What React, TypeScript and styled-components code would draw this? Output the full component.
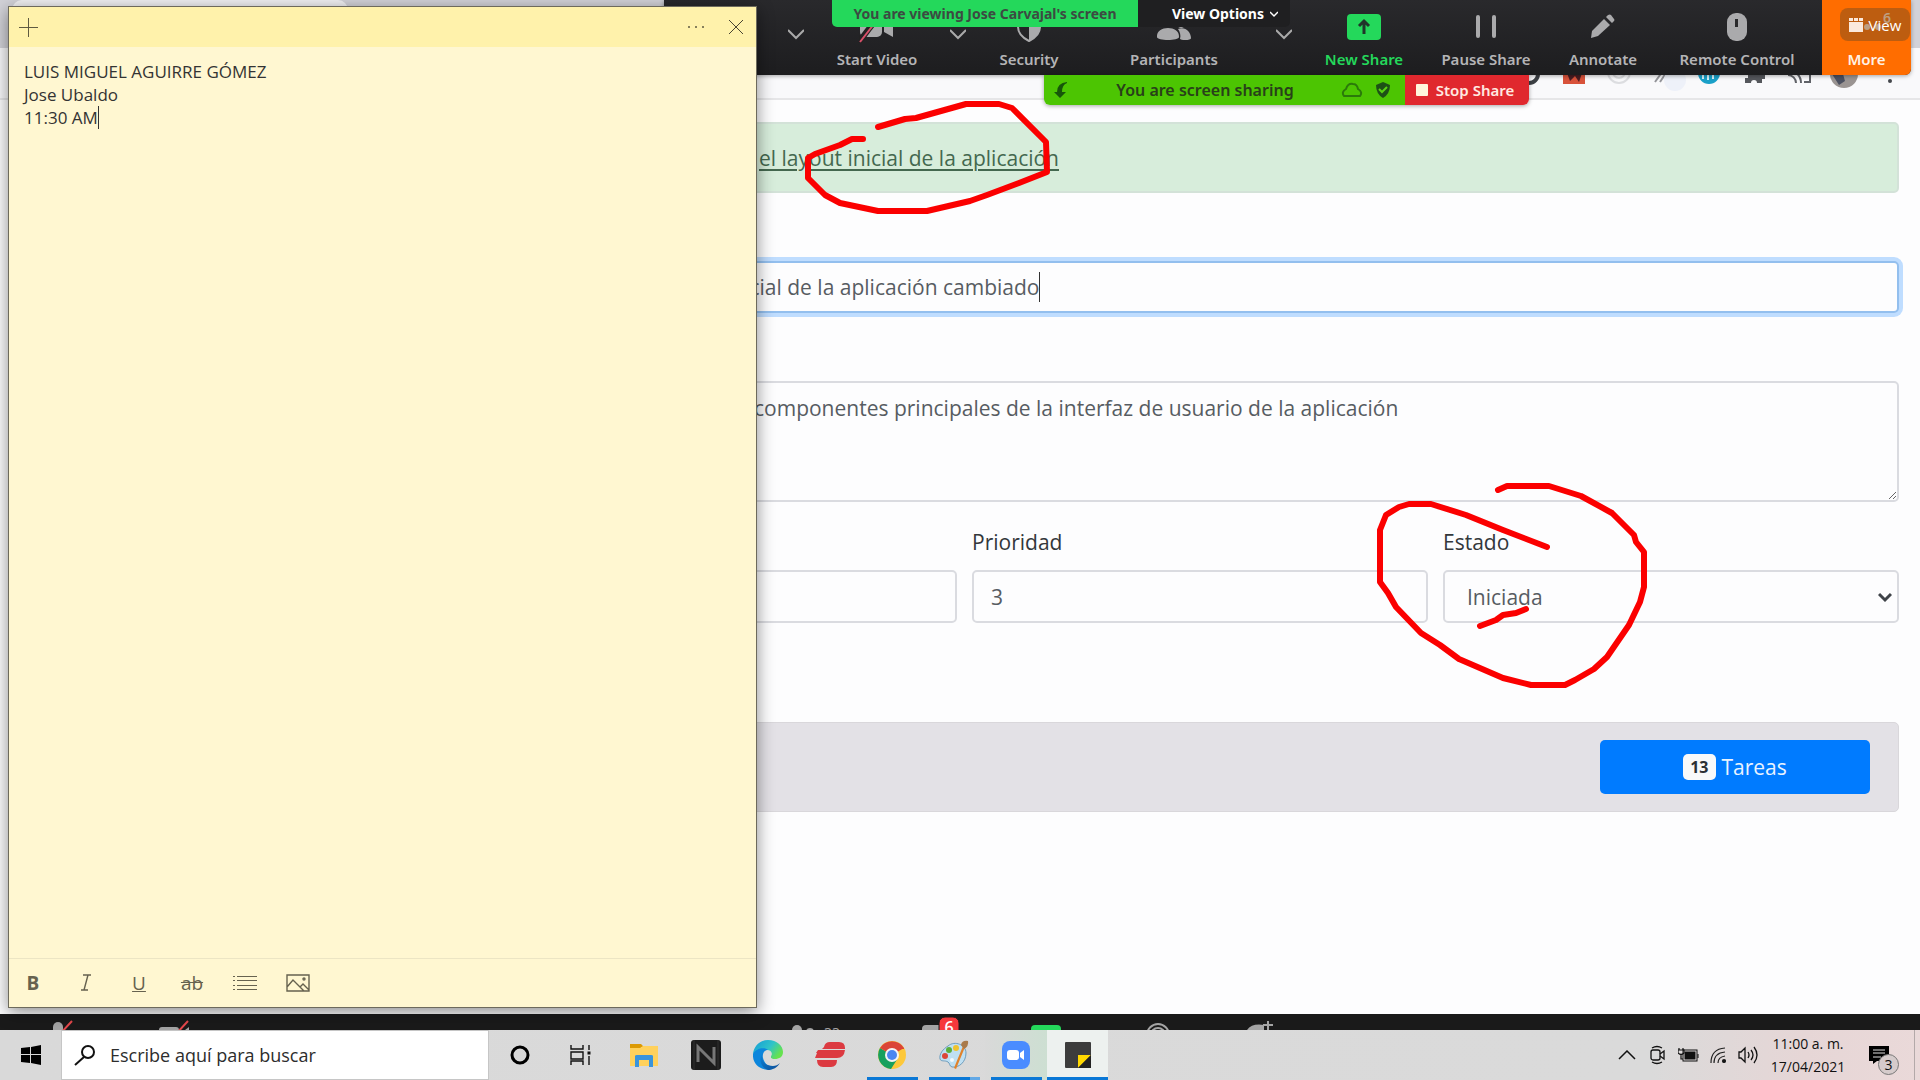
import React from "react";
import styled, { createGlobalStyle, css } from "styled-components";

const sans = `"Open Sans", "Noto Sans", sans-serif`;
const ui = `"Noto Sans", "Open Sans", sans-serif`;

const GlobalStyle = createGlobalStyle`
  *, *::before, *::after { box-sizing: border-box; }
  body { margin: 0; font-family: ${sans}; background: #fdfdfe; overflow: hidden; }
  button, input, textarea, select { font: inherit; color: inherit; margin: 0; }
  button { border: 0; padding: 0; background: none; cursor: pointer; }
  svg { display: block; flex: none; }
`;

const Desktop = styled.div`
  position: relative;
  display: flex;
  flex-direction: column;
  height: 100vh;
  overflow: hidden;
`;

/* ---------- shared browser page ---------- */

const Shared = styled.div`
  flex: 1;
  min-height: 0;
  display: flex;
  flex-direction: column;
  background: #fdfdfe;
  overflow: hidden;
`;

const TabStrip = styled.div`
  height: 48px;
  padding-left: 12px;
  background: #d2d2d8;
  flex: none;
`;

const Tab = styled.div`
  width: 336px;
  height: 48px;
  border-radius: 10px 10px 0 0;
  background: #f1f1f3;
`;

const BrowserBar = styled.div`
  flex: none;
  height: 52px;
  display: flex;
  align-items: center;
  justify-content: flex-end;
  padding-right: 10px;
  background: #f9f9fb;
  border-bottom: 2px solid #e6e6e8;
`;

const Page = styled.main`
  display: flex;
  flex-direction: column;
  padding: 22px 21px 0 30px;
  font-size: 21px;
  line-height: 28px;
  color: #575c62;
`;

const Alert = styled.div`
  height: 71px;
  display: flex;
  align-items: center;
  padding-left: 727px;
  border: 2px solid #d3e2d8;
  border-radius: 5px;
  background: #d7eddb;
  margin-bottom: 68px;
`;

const AlertLink = styled.a`
  color: #44684f;
  text-decoration: underline;
  text-decoration-thickness: 2px;
  text-underline-offset: 3px;
  white-space: nowrap;
`;

const control = css`
  width: 100%;
  border: 2px solid #dadbe0;
  border-radius: 5px;
  background: #fdfdfe;
  color: #575c62;
  outline: none;
`;

const TitleRow = styled.label`
  ${control}
  height: 52px;
  display: flex;
  align-items: center;
  padding: 0 18px 0 694px;
  border-color: #93bfee;
  box-shadow: 0 0 0 4px #bfddff;
  margin-bottom: 68px;
`;

const TitleInput = styled.input`
  field-sizing: content;
  border: 0;
  padding: 0;
  outline: none;
  background: none;
`;

const Caret = styled.span<{ $h: number }>`
  width: 1px;
  height: ${(p) => p.$h}px;
  background: #333;
`;

const Description = styled.textarea`
  ${control}
  display: block;
  height: 121px;
  padding: 11px 18px 11px 722px;
  resize: vertical;
  overflow: hidden;
  white-space: pre;
  margin-bottom: 26px;
`;

const Fields = styled.div`
  display: grid;
  grid-template-columns: repeat(4, 1fr);
  gap: 15px;
  margin-bottom: 99px;
`;

const Field = styled.div<{ $span?: number }>`
  grid-column: span ${(p) => p.$span ?? 1};
  display: flex;
  flex-direction: column;
  justify-content: flex-end;
  gap: 14px;
`;

const Label = styled.label`
  color: #33373b;
`;

const FieldInput = styled.input`
  ${control}
  height: 53px;
  padding: 0 17px;
`;

const SelectWrap = styled.div`
  position: relative;
`;

const FieldSelect = styled.select`
  ${control}
  display: block;
  height: 53px;
  padding: 0 22px;
  appearance: none;
`;

const SelectArrow = styled.svg`
  position: absolute;
  right: 7px;
  top: 20px;
  pointer-events: none;
`;

const ActionBar = styled.div`
  height: 90px;
  display: flex;
  align-items: center;
  justify-content: flex-end;
  padding-right: 28px;
  border: 1px solid #d9d7db;
  border-radius: 5px;
  background: #e3e1e6;
`;

const TasksButton = styled.button`
  width: 270px;
  height: 54px;
  display: flex;
  align-items: center;
  justify-content: center;
  gap: 6px;
  border-radius: 5px;
  background: #007bff;
  color: #e9f3ff;
`;

const Count = styled.span`
  padding: 0 7px;
  border-radius: 5px;
  background: #f8f9fa;
  color: #2b3035;
  font-size: 16px;
  line-height: 26px;
  font-weight: 700;
`;

/* ---------- meeting overlays ---------- */

const MeetingBar = styled.div`
  position: absolute;
  top: 0;
  right: 9px;
  z-index: 2;
  width: 1247px;
  height: 75px;
  display: flex;
  border-radius: 0 0 6px 6px;
  overflow: hidden;
  background: linear-gradient(#29292c, #1d1d1f);
  box-shadow: 0 1px 4px rgba(0, 0, 0, 0.35);
`;

const Tool = styled.button<{ $w: number; $tone?: string; $bg?: string }>`
  width: ${(p) => p.$w}px;
  flex: none;
  display: flex;
  flex-direction: column;
  align-items: center;
  justify-content: flex-end;
  gap: 6px;
  padding-bottom: 6px;
  color: ${(p) => p.$tone ?? "#b4b4b6"};
  background: ${(p) => p.$bg ?? "transparent"};
  font-family: ${ui};
  font-size: 15px;
  line-height: 20px;
  font-weight: 600;
  white-space: nowrap;
`;

const Chevron = styled.button<{ $w: number }>`
  width: ${(p) => p.$w}px;
  flex: none;
  display: flex;
  align-items: center;
  justify-content: center;
  padding-bottom: 8px;
`;

const Spacer = styled.div`
  flex: 1;
`;

const ToolGap = styled.div`
  width: 10px;
  flex: none;
`;

const ViewBanner = styled.div`
  position: absolute;
  top: 0;
  left: 832px;
  z-index: 3;
  height: 27px;
  display: flex;
  font-family: ${ui};
  font-size: 14px;
  line-height: 27px;
  font-weight: 700;
  white-space: nowrap;
`;

const Viewing = styled.div`
  width: 306px;
  text-align: center;
  border-radius: 0 0 0 5px;
  background: #24d85b;
  color: #3c4a42;
`;

const ViewOptions = styled.button`
  width: 152px;
  display: flex;
  align-items: center;
  justify-content: flex-end;
  padding-right: 12px;
  gap: 6px;
  border-radius: 0 0 5px 0;
  background: #1f1f21;
  color: #fff;
`;

const ShareBar = styled.div`
  position: absolute;
  top: 75px;
  left: 1044px;
  z-index: 2;
  height: 30px;
  display: flex;
  border-radius: 0 0 6px 6px;
  overflow: hidden;
  box-shadow: 0 1px 4px rgba(0, 0, 0, 0.35);
  font-family: ${ui};
  font-size: 16px;
  line-height: 28px;
  font-weight: 600;
  white-space: nowrap;
`;

const Sharing = styled.div`
  width: 361px;
  display: flex;
  align-items: center;
  justify-content: space-between;
  padding: 0 15px 0 9px;
  background: #4cc502;
  color: #28401a;
`;

const ShareIcons = styled.div`
  display: flex;
  align-items: center;
  gap: 13px;
`;

const StopShare = styled.button`
  width: 124px;
  display: flex;
  align-items: center;
  justify-content: center;
  gap: 8px;
  padding-right: 4px;
  background: #e0282e;
  color: #ffe9e0;
  font-size: 15px;
`;

const StopSquare = styled.span`
  width: 12px;
  height: 12px;
  border-radius: 1px;
  background: #fff6dc;
`;

const ViewButton = styled.button`
  position: absolute;
  top: 8px;
  right: 10px;
  z-index: 3;
  width: 70px;
  height: 33px;
  display: flex;
  align-items: center;
  justify-content: center;
  gap: 6px;
  border-radius: 8px;
  background: rgba(90, 70, 40, 0.4);
  color: #fff;
  font-size: 15px;
  line-height: 24px;
`;

const Ink = styled.svg`
  position: absolute;
  left: 0;
  top: 0;
  z-index: 3;
  pointer-events: none;
`;

/* ---------- sticky note ---------- */

const Note = styled.section`
  position: absolute;
  left: 8px;
  top: 6px;
  z-index: 4;
  width: 749px;
  height: 1002px;
  display: flex;
  flex-direction: column;
  border: 1px solid #6d6a5c;
  background: #fff7d1;
  box-shadow: 0 4px 16px rgba(0, 0, 0, 0.45);
`;

const NoteHeader = styled.header`
  height: 40px;
  flex: none;
  display: flex;
  background: #fff2ab;
`;

const HeadButton = styled.button<{ $w: number }>`
  width: ${(p) => p.$w}px;
  display: flex;
  align-items: center;
  justify-content: center;
`;

const NoteBody = styled.div`
  flex: 1;
  padding: 13px 15px;
  font-size: 17px;
  line-height: 23px;
  color: #333;
`;

const NoteLine = styled.div`
  display: flex;
  align-items: center;
`;

const NoteTools = styled.footer`
  height: 49px;
  display: flex;
  align-items: center;
  gap: 5px;
  border-top: 1px solid #ece5c4;
  color: #66624f;
`;

const NoteTool = styled.button`
  width: 48px;
  height: 46px;
  display: flex;
  align-items: center;
  justify-content: center;
  font-size: 19px;
  line-height: 24px;
`;

/* ---------- bottom strips ---------- */

const MeetingFooter = styled.div`
  flex: none;
  height: 16px;
  overflow: hidden;
  background: #1a1a1a;
`;

const Taskbar = styled.footer`
  flex: none;
  height: 50px;
  display: flex;
  background: linear-gradient(90deg, #d9d9d9 0%, #dadada 86%, #e6d6d6 94%, #ead9d9 100%);
  color: #111;
`;

const StartButton = styled.button`
  width: 61px;
  display: flex;
  align-items: center;
  justify-content: center;
`;

const Search = styled.label`
  width: 428px;
  display: flex;
  align-items: center;
  gap: 14px;
  padding-left: 12px;
  border: 1px solid #c6c6c6;
  background: #fff;
`;

const SearchInput = styled.input`
  flex: 1;
  min-width: 0;
  border: 0;
  padding: 0;
  outline: none;
  background: none;
  font-size: 18px;
  &::placeholder { color: #2d2d2d; opacity: 1; }
`;

type State = "open" | "stacked" | "tint" | "active";

const backs: Record<State, string> = {
  open: "none",
  stacked: "none",
  tint: "linear-gradient(90deg, #d9d9d9, #cddfd2)",
  active: "#edf1ef",
};

const AppButton = styled.button<{ $state?: State }>`
  width: ${(p) => (p.$state === "active" ? 61 : 62)}px;
  display: flex;
  flex-direction: column;
  align-items: center;
  background: ${(p) => (p.$state ? backs[p.$state] : "none")};
  &::after {
    content: "";
    height: 3px;
    width: ${(p) => (p.$state === "active" ? 61 : 51)}px;
    background: ${(p) =>
      p.$state === "stacked"
        ? "linear-gradient(90deg, #0a78d6 41px, #63a9e6 41px)"
        : p.$state
          ? "#0a78d6"
          : "transparent"};
  }
`;

const Glyph = styled.span`
  flex: 1;
  display: flex;
  align-items: center;
  padding-top: 3px;
`;

const Tray = styled.div`
  margin-left: auto;
  display: flex;
  align-items: center;
`;

const TrayButton = styled.button<{ $w: number }>`
  width: ${(p) => p.$w}px;
  height: 50px;
  display: flex;
  align-items: center;
  justify-content: center;
`;

const Clock = styled.div`
  width: 92px;
  text-align: center;
  font-size: 14px;
  line-height: 23px;
  white-space: nowrap;
`;

const Alerts = styled.button`
  position: relative;
  width: 60px;
  height: 50px;
  padding-left: 15px;
`;

const AlertCount = styled.span`
  position: absolute;
  left: 24px;
  top: 24px;
  width: 21px;
  height: 21px;
  border: 1px solid #777;
  border-radius: 50%;
  background: #d5cbcb;
  font-size: 14px;
  line-height: 19px;
  text-align: center;
`;

const ShowDesktop = styled.div`
  width: 6px;
  height: 50px;
  border-left: 1px solid #b3a9a9;
`;

const Down = ({ c = "#aaa", w = 16, s = 2 }: { c?: string; w?: number; s?: number }) => (
  <svg width={w} height={w} viewBox="0 0 16 16" fill="none" stroke={c} strokeWidth={s}>
    <path d="M0 4l8 8 8-8" />
  </svg>
);

const Extensions = () => (
  <svg width="400" height="50" viewBox="1510 48 400 50">
    <circle cx="1529" cy="74" r="9" fill="none" stroke="#3c3f44" strokeWidth="4" />
    <rect x="1563" y="62" width="22" height="22" fill="#d8523a" />
    <path d="M1567 73l3 8 5-5 4 6 3-9z" fill="#4a1d22" />
    <circle cx="1619" cy="72" r="11" fill="none" stroke="#dcdde0" strokeWidth="2" />
    <circle cx="1619" cy="72" r="6" fill="none" stroke="#dcdde0" strokeWidth="2" />
    <path d="M1655 82l10-14M1660 82l8-12" stroke="#94959a" strokeWidth="2" />
    <circle cx="1675" cy="80" r="11" fill="#eef1f9" />
    <circle cx="1709" cy="73" r="11" fill="#1aa0c8" />
    <path d="M1703 79v-4M1708 80v-5M1713 79v-4" stroke="#d5f0f7" strokeWidth="2" />
    <path d="M1746 65h16v10h3v4h-3v4h-5a3 3 0 0 0-6 0h-6v-5h3v-4h-2z" fill="#55575c" />
    <path
      d="M1788 75a8 8 0 0 1 8 8M1788 70a13 13 0 0 1 13 13M1804 82h6V66"
      fill="none"
      stroke="#606268"
      strokeWidth="2"
    />
    <circle cx="1844" cy="74" r="14" fill="#9a9492" />
    <path d="M1832 74l7 11 6-4-2-7z" fill="#4b5060" />
    <circle cx="1890" cy="81" r="2" fill="#45474c" />
    <circle cx="1890" cy="73" r="2" fill="#45474c" />
  </svg>
);

const CameraOff = () => (
  <svg width="36" height="32" viewBox="0 0 36 32">
    <rect x="1" y="6" width="22" height="20" rx="5" fill="#aaaaac" />
    <path d="M25 14l9-6v18l-9-5z" fill="#aaaaac" />
    <path d="M0 31L22 2" stroke="#222" strokeWidth="6" />
    <path d="M1 31L22 4" stroke="#d9506a" strokeWidth="2" />
  </svg>
);

const Shield = () => (
  <svg width="26" height="31" viewBox="0 0 26 31">
    <path d="M13 1l11 4v10c0 7-5 11-11 14C7 26 2 22 2 15V5z" fill="none" stroke="#aaaaac" strokeWidth="2" />
    <path d="M13 1l11 4v10c0 7-5 11-11 14z" fill="#aaaaac" />
  </svg>
);

const People = () => (
  <svg width="36" height="32" viewBox="0 0 36 32" fill="#aaaaac">
    <circle cx="12" cy="10" r="6" />
    <path d="M1 26c-1-12 23-12 22 0 0 4-22 4-22 0z" />
    <circle cx="25" cy="12" r="5" />
    <path d="M22 18c7-3 13 3 13 9 0 3-11 2-11 1 1-4 0-7-2-10z" />
  </svg>
);

const ShareUp = () => (
  <svg width="34" height="32" viewBox="0 0 34 32">
    <rect y="3" width="34" height="26" rx="4" fill="#24d85b" />
    <path d="M17 23V11M12 15l5-5 5 5" fill="none" stroke="#20352a" strokeWidth="3" />
  </svg>
);

const Pause = () => (
  <svg width="22" height="32" viewBox="0 0 22 32" fill="#aaaaac">
    <rect x="1" y="4" width="4" height="23" rx="2" />
    <rect x="17" y="4" width="4" height="23" rx="2" />
  </svg>
);

const Pencil = () => (
  <svg width="26" height="32" viewBox="0 0 26 32" fill="#aaaaac">
    <path d="M1 27l1-7L14 8l6 6L8 25z" />
    <path d="M16 6l2-2q2-1 3 0l3 4q1 1 0 2l-2 2z" />
  </svg>
);

const Mouse = () => (
  <svg width="22" height="32" viewBox="0 0 22 32">
    <rect x="1" y="2" width="20" height="28" rx="9" fill="#aaaaac" />
    <rect x="9" y="8" width="3" height="8" fill="#2a2a2c" />
  </svg>
);

const Dots = () => (
  <svg width="54" height="32" viewBox="0 0 54 32" fill="#ffd9bd">
    <circle cx="16" cy="16" r="3" />
    <circle cx="27" cy="16" r="3" />
    <circle cx="38" cy="16" r="3" />
    <text x="43" y="12" fontSize="14" fontWeight="600">6</text>
  </svg>
);

const BottomIcons = () => (
  <svg width="1300" height="16" viewBox="0 1014 1300 16">
    <g fill="#a4a4a4">
      <rect x="53" y="1022" width="10" height="20" rx="5" />
      <rect x="159" y="1027" width="20" height="14" rx="3" />
      <path d="M185 1030l4-3v4z" />
      <circle cx="797" cy="1030" r="5" />
      <circle cx="810" cy="1032" r="4" />
      <rect x="922" y="1025" width="22" height="18" rx="4" />
      <path d="M1247 1030q5-7 17-5v5z" />
      <text x="824" y="1038" fontSize="14">33</text>
    </g>
    <path d="M60 1034l12-13M176 1034l12-13" stroke="#e8484c" strokeWidth="2" />
    <rect x="939" y="1017" width="20" height="24" rx="6" fill="#f6383c" stroke="#1a1a1a" />
    <text x="949" y="1033" fontSize="16" fontWeight="600" fill="#fff" textAnchor="middle">6</text>
    <rect x="1031" y="1025" width="30" height="20" rx="4" fill="#24d85b" />
    <g fill="none" stroke="#a4a4a4" strokeWidth="2">
      <circle cx="1158" cy="1035" r="11" />
      <circle cx="1158" cy="1035" r="7" />
      <path d="M1268 1021v9M1263 1025h10" />
    </g>
  </svg>
);

export default function App() {
  return (
    <Desktop>
      <GlobalStyle />
      <Shared>
        <TabStrip>
          <Tab />
        </TabStrip>
        <BrowserBar>
          <Extensions />
        </BrowserBar>
        <Page>
          <Alert>
            <AlertLink href="#layout">el layout inicial de la aplicación</AlertLink>
          </Alert>
          <TitleRow>
            <TitleInput aria-label="Título" defaultValue="inicial de la aplicación cambiado" />
            <Caret $h={30} />
          </TitleRow>
          <Description
            aria-label="Descripción"
            defaultValue="componentes principales de la interfaz de usuario de la aplicación"
          />
          <Fields>
            <Field $span={2}>
              <FieldInput aria-label="Fecha" />
            </Field>
            <Field>
              <Label htmlFor="prioridad">Prioridad</Label>
              <FieldInput id="prioridad" defaultValue="3" />
            </Field>
            <Field>
              <Label htmlFor="estado">Estado</Label>
              <SelectWrap>
                <FieldSelect id="estado" defaultValue="Iniciada">
                  <option>Iniciada</option>
                </FieldSelect>
                <SelectArrow width="14" height="14" viewBox="0 0 14 14" fill="none" stroke="#3f4348" strokeWidth="3">
                  <path d="M1 4l6 6 6-6" />
                </SelectArrow>
              </SelectWrap>
            </Field>
          </Fields>
          <ActionBar>
            <TasksButton>
              <Count>13</Count>
              Tareas
            </TasksButton>
          </ActionBar>
        </Page>
      </Shared>

      <MeetingFooter>
        <BottomIcons />
      </MeetingFooter>

      <Taskbar>
        <StartButton aria-label="Inicio">
          <svg width="20" height="20" viewBox="0 0 20 20">
            <path d="M0 3l9-1v7H0zM10 2l10-2v9H10zM0 10h9v8l-9-1zM10 10h10v10l-10-2z" />
          </svg>
        </StartButton>
        <Search>
          <svg width="22" height="22" viewBox="0 0 22 22" fill="none" stroke="#111" strokeWidth="2">
            <circle cx="14" cy="8" r="6" />
            <path d="M10 13l-9 8" />
          </svg>
          <SearchInput aria-label="Buscar" placeholder="Escribe aquí para buscar" />
        </Search>
        <AppButton aria-label="Cortana">
          <Glyph>
            <svg width="20" height="20" viewBox="0 0 20 20">
              <circle cx="10" cy="10" r="8" fill="none" stroke="#000" strokeWidth="3" />
            </svg>
          </Glyph>
        </AppButton>
        <AppButton aria-label="Vista de tareas">
          <Glyph>
            <svg width="24" height="24" viewBox="0 0 24 24" fill="none" stroke="#111">
              <path d="M1 2v4h12V2M1 22v-4h12v4M1 9h12v7H1zM19 2v5M19 13v9" strokeWidth="1.4" />
              <rect x="18" y="9" width="2" height="2" fill="#111" />
            </svg>
          </Glyph>
        </AppButton>
        <AppButton aria-label="Explorador de archivos">
          <Glyph>
            <svg width="28" height="24" viewBox="0 0 28 24">
              <path d="M0 1h11l3 3h-3v4H0z" fill="#dc9a04" />
              <path d="M0 5h10l3-2h15v20H0z" fill="#ffd15c" />
              <path d="M5 24V13q0-1 2-1h14q2 0 2 1v11h-4v-7H9v7z" fill="#3a94dc" />
            </svg>
          </Glyph>
        </AppButton>
        <AppButton aria-label="N">
          <Glyph>
            <svg width="30" height="30" viewBox="0 0 30 30">
              <rect width="30" height="30" rx="3" fill="#1c1c1c" />
              <path d="M3 0v30M27 0v30" stroke="#303030" />
              <path d="M7 22V7l16 16V7" fill="none" stroke="#777" strokeWidth="3" />
            </svg>
          </Glyph>
        </AppButton>
        <AppButton aria-label="Edge">
          <Glyph>
            <svg width="30" height="30" viewBox="0 0 30 30">
              <defs>
                <linearGradient id="edgeTop" x1="0" y1="0" x2="1" y2="0.5">
                  <stop offset="0" stopColor="#139bd8" />
                  <stop offset="0.6" stopColor="#2fc3c9" />
                  <stop offset="1" stopColor="#66e24f" />
                </linearGradient>
                <linearGradient id="edgeLow" x1="0" y1="0" x2="1" y2="1">
                  <stop offset="0" stopColor="#0c86dc" />
                  <stop offset="1" stopColor="#0d4c94" />
                </linearGradient>
              </defs>
              <path d="M0 14C1 5 8 0 15 0c9 0 15 6 15 12 0 5-4 7-8 7-3 0-5-1-4-3 2-3 0-6-4-6-6 0-10 2-14 4z" fill="url(#edgeTop)" />
              <path d="M0 14c3-6 12-7 15-4-4 0-6 4-5 8 1 5 6 9 10 11-9 3-21-3-20-15z" fill="#0c86dc" />
              <path d="M12 11c-5 4-3 12 3 14 5 2 9 1 12-2-3 5-8 7-12 7-6-2-12-11-3-19z" fill="url(#edgeLow)" />
              <path d="M14 11c4 0 5 3 4 5-1 3 2 4 5 4-3 2-11 0-11-5 0-2 1-3 2-4z" fill="#dadada" />
            </svg>
          </Glyph>
        </AppButton>
        <AppButton aria-label="VPN">
          <Glyph>
            <svg width="30" height="26" viewBox="0 0 30 26" fill="#dc3a41">
              <path d="M9 5q1-5 6-5h9q6 0 6 6v1H7z" />
              <path d="M3 8h27q-1 8-8 8H0l2-5H1z" />
              <path d="M2 18h20q0 7-6 7H8q-6 0-6-7z" />
            </svg>
          </Glyph>
        </AppButton>
        <AppButton aria-label="Chrome" $state="open">
          <Glyph>
            <svg width="28" height="28" viewBox="0 0 28 28">
              <circle cx="14" cy="14" r="14" fill="#fdc83a" />
              <path d="M14 14L2 7a14 14 0 0 0 11 21l7-11z" fill="#17a05d" />
              <path d="M14 14L2 7a14 14 0 0 1 24 0z" fill="#db4437" />
              <path d="M14 7h12v1H14z" fill="#db4437" />
              <circle cx="14" cy="14" r="7" fill="#f4f4f4" />
              <circle cx="14" cy="14" r="5" fill="#4a86f0" />
            </svg>
          </Glyph>
        </AppButton>
        <AppButton aria-label="Paint" $state="stacked">
          <Glyph>
            <svg width="30" height="30" viewBox="0 0 30 30">
              <path d="M9 6C16 0 27 5 27 13c0 9-7 15-14 14-3-1-2-4-4-5-3-2-7 0-8-3C0 14 4 9 9 6z" fill="#bfe0f3" stroke="#6f9dbd" />
              <circle cx="6" cy="16" r="3" fill="#dc4639" />
              <circle cx="10" cy="10" r="3" fill="#5aae3c" />
              <circle cx="17" cy="8" r="3" fill="#f0c22e" />
              <circle cx="13" cy="20" r="2" fill="#f4fafd" />
              <path d="M24 6l2 1-9 22-2-1z" fill="#e0822c" />
              <path d="M22 5q1-5 7-4 1 5-4 8z" fill="#a97a4a" />
            </svg>
          </Glyph>
        </AppButton>
        <AppButton aria-label="Zoom" $state="tint">
          <Glyph>
            <svg width="28" height="28" viewBox="0 0 28 28">
              <rect width="28" height="28" rx="8" fill="#4a8cff" />
              <rect x="5" y="9" width="12" height="10" rx="3" fill="#fff" />
              <path d="M18 12l4-3v10l-4-3z" fill="#fff" />
            </svg>
          </Glyph>
        </AppButton>
        <AppButton aria-label="Notas rápidas" $state="active">
          <Glyph>
            <svg width="28" height="26" viewBox="0 0 28 26">
              <rect x="1" width="26" height="26" rx="1" fill="#3c3c3c" />
              <path d="M14 26V13h13z" fill="#ffd800" />
              <path d="M14 26l13-13v13z" fill="#222" />
            </svg>
          </Glyph>
        </AppButton>
        <Tray>
          <TrayButton $w={30} aria-label="Mostrar iconos ocultos">
            <svg width="18" height="10" viewBox="0 0 18 10" fill="none" stroke="#111" strokeWidth="1.5">
              <path d="M1 9l8-8 8 8" />
            </svg>
          </TrayButton>
          <TrayButton $w={32} aria-label="Reunirse ahora">
            <svg width="16" height="20" viewBox="0 0 16 20" fill="none" stroke="#111" strokeWidth="1.3">
              <path d="M2 3q5-3 10 0M2 17q5 3 10 0" />
              <rect x="1" y="5" width="9" height="10" rx="2" />
              <path d="M10 9l4-3v8l-4-3" />
            </svg>
          </TrayButton>
          <TrayButton $w={28} aria-label="Batería">
            <svg width="21" height="14" viewBox="0 0 21 14" fill="none" stroke="#111">
              <path d="M1 0v2M5 0v2M0 2h6v3q-3 3-6 0zM3 6v5h2" strokeWidth="1.2" />
              <rect x="5" y="2" width="14" height="11" />
              <rect x="7" y="4" width="10" height="7" fill="#111" />
              <path d="M20 6v4" />
            </svg>
          </TrayButton>
          <TrayButton $w={32} aria-label="Red">
            <svg width="16" height="16" viewBox="0 0 16 16" fill="none" stroke="#222" strokeWidth="1.2">
              <path d="M1 16Q1 2 15 1M4 16Q4 6 15 5M8 16q0-6 7-7" />
              <circle cx="14" cy="14" r="1.5" fill="#111" />
            </svg>
          </TrayButton>
          <TrayButton $w={28} aria-label="Volumen">
            <svg width="21" height="18" viewBox="0 0 21 18" fill="none" stroke="#111" strokeWidth="1.3">
              <path d="M1 6h2l4-4v14l-4-4H1zM10 6q2 3 0 6M13 4q4 5 0 10M16 1q6 8 0 16" />
            </svg>
          </TrayButton>
          <Clock>
            <div>11:00 a. m.</div>
            <div>17/04/2021</div>
          </Clock>
          <Alerts aria-label="Notificaciones">
            <svg width="20" height="18" viewBox="0 0 20 18">
              <path d="M0 0h20v15H8l-4 3v-3H0z" />
              <path d="M4 4h12M4 7h12M4 11h8" stroke="#ddd" />
            </svg>
            <AlertCount>3</AlertCount>
          </Alerts>
          <ShowDesktop />
        </Tray>
      </Taskbar>

      <MeetingBar>
        <Spacer />
        <Chevron $w={40} aria-label="Opciones de audio"><Down /></Chevron>
        <Tool $w={122}><CameraOff />Start Video</Tool>
        <Chevron $w={40} aria-label="Opciones de vídeo"><Down /></Chevron>
        <Tool $w={102}><Shield />Security</Tool>
        <Tool $w={188}><People />Participants</Tool>
        <Chevron $w={32} aria-label="Opciones de participantes"><Down /></Chevron>
        <Tool $w={128} $tone="#24d85b"><ShareUp />New Share</Tool>
        <Tool $w={116}><Pause />Pause Share</Tool>
        <Tool $w={118}><Pencil />Annotate</Tool>
        <Tool $w={150}><Mouse />Remote Control</Tool>
        <ToolGap />
        <Tool $w={89} $tone="#fff2e6" $bg="#ff6d00"><Dots />More</Tool>
      </MeetingBar>

      <ShareBar>
        <Sharing>
          <svg width="16" height="18" viewBox="0 0 16 18" fill="#17560a">
            <path d="M14 2Q9 4 9 11h4l-6 6-6-6h3Q4 2 14 1z" />
          </svg>
          You are screen sharing
          <ShareIcons>
            <svg width="22" height="16" viewBox="0 0 22 16" fill="none" stroke="#2b7a0a" strokeWidth="2">
              <path d="M3 14q-3-4 2-7 2-6 7-5 4 0 5 5 5 3 2 7z" />
            </svg>
            <svg width="14" height="16" viewBox="0 0 14 16">
              <path d="M7 0l7 3q0 9-7 13Q0 12 0 3z" fill="#1d5016" />
              <path d="M3 7l3 3 5-5" fill="none" stroke="#59d312" strokeWidth="2" />
            </svg>
          </ShareIcons>
        </Sharing>
        <StopShare><StopSquare />Stop Share</StopShare>
      </ShareBar>

      <ViewBanner>
        <Viewing>You are viewing Jose Carvajal's screen</Viewing>
        <ViewOptions>View Options <Down c="#fff" w={8} s={3} /></ViewOptions>
      </ViewBanner>

      <ViewButton>
        <svg width="14" height="14" viewBox="0 0 14 14" fill="#fbe9dc">
          <path d="M0 0h4v3H0zM5 0h4v3H5zM10 0h4v3h-4zM0 4h14v10H0z" />
        </svg>
        View
      </ViewButton>

      <Ink width="1700" height="720" viewBox="0 0 1700 720" fill="none" stroke="#fb0000" strokeWidth="6" strokeLinecap="round" strokeLinejoin="round">
        <path d="M878 127l27-8 11-1 50-14h33l13 4 34 34 1 30-28 11-32 12-17 6-43 10h-49l-38-8-15-8-17-17v-20l7-4 25-9 12-6h11" />
        <path d="M1498 490l9-4h42l32 10 31 17 22 22 2 7 8 10v35l-4 15-11 23-22 32-13 12-19 11-10 5h-34l-28-7-44-19-19-14-19-12-25-26-8-14-8-11v-52l6-15 13-8 10-3h22l35 11 37 15 44 17" />
        <path d="M1480 626l16-6 7-5 13-2 10-4" />
      </Ink>

      <Note>
        <NoteHeader>
          <HeadButton $w={38} aria-label="Nueva nota">
            <svg width="19" height="19" viewBox="0 0 19 19" stroke="#5f5a40">
              <path d="M9.5 0v19M0 9.5h19" />
            </svg>
          </HeadButton>
          <Spacer />
          <HeadButton $w={40} aria-label="Menú">
            <svg width="18" height="4" viewBox="0 0 18 4" fill="#5f5a40">
              <circle cx="2" cy="2" r="1" />
              <circle cx="9" cy="2" r="1" />
              <circle cx="16" cy="2" r="1" />
            </svg>
          </HeadButton>
          <HeadButton $w={40} aria-label="Cerrar nota">
            <svg width="16" height="16" viewBox="0 0 16 16" stroke="#4a4632">
              <path d="M1 1l14 14M15 1L1 15" />
            </svg>
          </HeadButton>
        </NoteHeader>
        <NoteBody>
          <NoteLine>LUIS MIGUEL AGUIRRE GÓMEZ</NoteLine>
          <NoteLine>Jose Ubaldo</NoteLine>
          <NoteLine>11:30 AM<Caret $h={23} /></NoteLine>
        </NoteBody>
        <NoteTools>
          <NoteTool aria-label="Negrita"><b>B</b></NoteTool>
          <NoteTool aria-label="Cursiva">
            <svg width="12" height="18" viewBox="0 0 12 18" stroke="#66624f" strokeWidth="1.4" fill="none">
              <path d="M3 1h8M1 16h7M8 1L4 16" />
            </svg>
          </NoteTool>
          <NoteTool aria-label="Subrayado"><u>U</u></NoteTool>
          <NoteTool aria-label="Tachado"><s>ab</s></NoteTool>
          <NoteTool aria-label="Lista">
            <svg width="24" height="16" viewBox="0 0 24 16" stroke="#66624f">
              <path d="M4 1.5h20M4 5.500h20M4 10.500h20M4 14.500h20M0 1.500h2M0 5.500h2M0 10.500h2M0 14.500h2" />
            </svg>
          </NoteTool>
          <NoteTool aria-label="Imagen">
            <svg width="24" height="18" viewBox="0 0 24 18" stroke="#66624f" strokeWidth="1.4" fill="none">
              <path d="M1 1h22v16H1zM1 13l6-7 11 11M14 13l3-3 6 6" />
              <circle cx="18" cy="5" r="1" />
            </svg>
          </NoteTool>
        </NoteTools>
      </Note>
    </Desktop>
  );
}
